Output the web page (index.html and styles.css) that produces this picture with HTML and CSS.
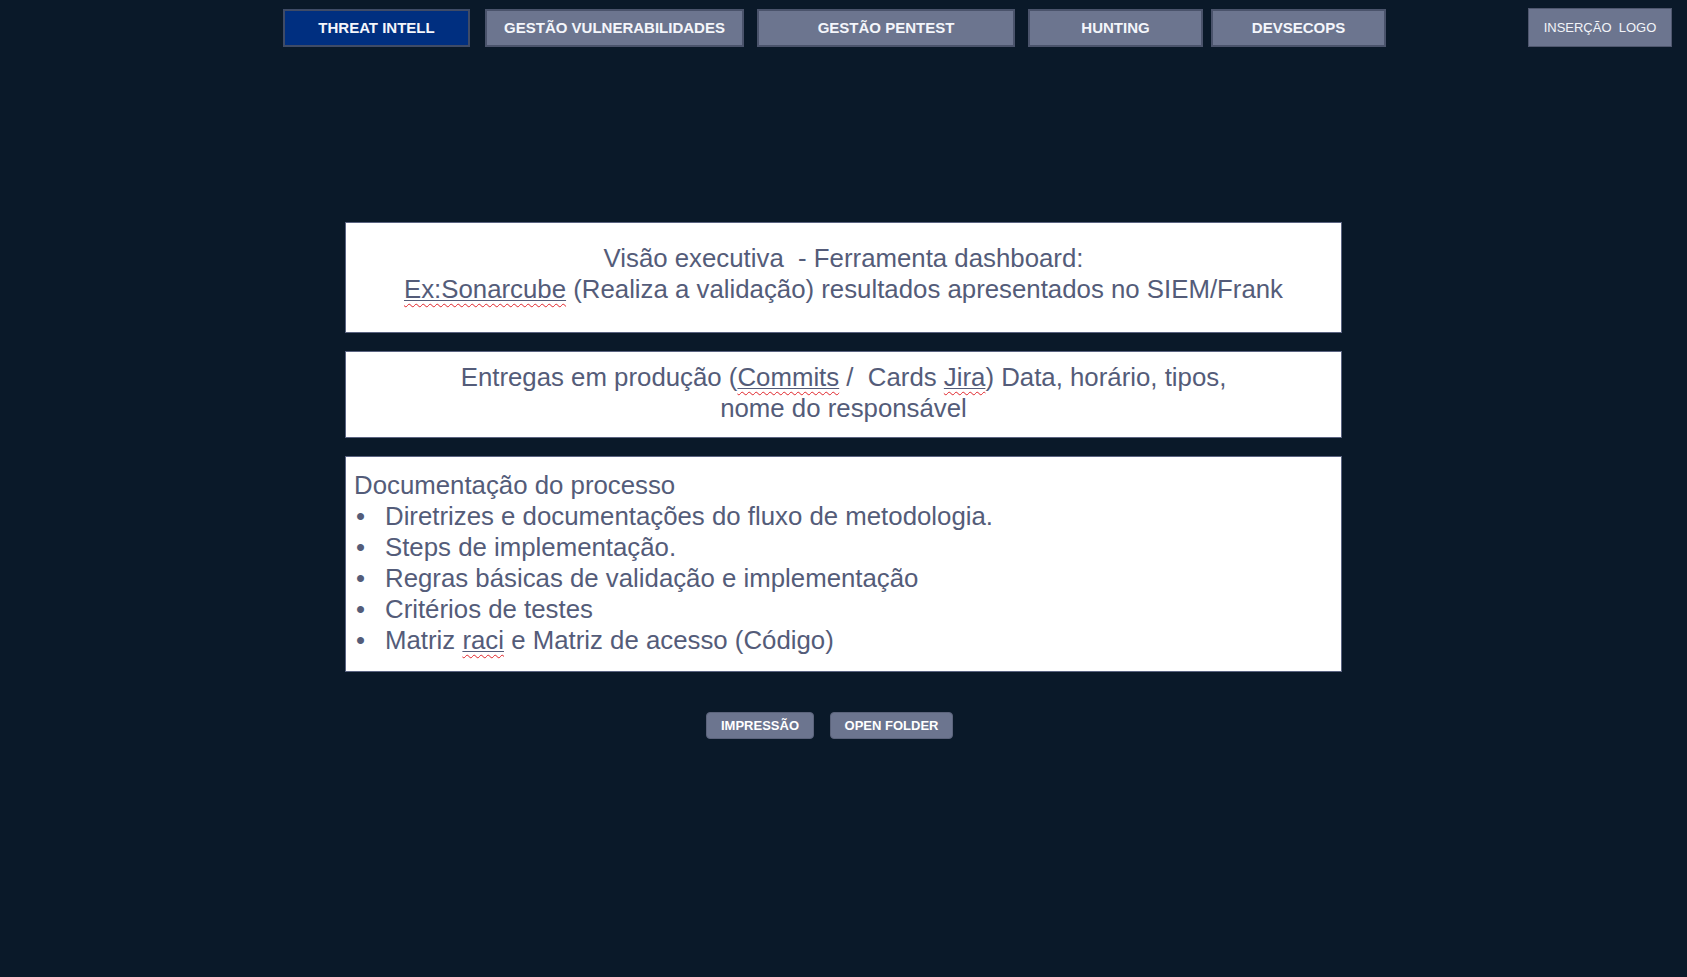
FILE: index.html
```html
<!DOCTYPE html>
<html lang="pt">
<head>
<meta charset="utf-8">
<title>DevSecOps</title>
<link rel="stylesheet" href="styles.css">
</head>
<body>
<header class="topbar">
  <nav class="tabs">
    <a class="tab tab-active tab-threat">THREAT INTELL</a>
    <a class="tab tab-vuln">GESTÃO VULNERABILIDADES</a>
    <a class="tab tab-pentest">GESTÃO PENTEST</a>
    <a class="tab tab-hunting">HUNTING</a>
    <a class="tab tab-devsecops">DEVSECOPS</a>
  </nav>
  <div class="logo">INSERÇÃO&nbsp; LOGO</div>
</header>

<main class="content">
  <section class="card card-exec">
    <p>Visão executiva &nbsp;- Ferramenta dashboard:<br><span class="ul"><span class="spell">Ex:Sonarcube</span></span> (Realiza a validação) resultados apresentados no SIEM/Frank</p>
  </section>

  <section class="card card-deliv">
    <p>Entregas em produção (<span class="ul"><span class="spell">Commits</span></span> / &nbsp;Cards <span class="ul"><span class="spell">Jira</span></span>) Data, horário, tipos,<br>nome do responsável</p>
  </section>

  <section class="card card-docs">
    <p class="docs-title">Documentação do processo</p>
    <ul class="docs-list">
      <li><span class="bullet">•</span><span>Diretrizes e documentações do fluxo de metodologia.</span></li>
      <li><span class="bullet">•</span><span>Steps de implementação.</span></li>
      <li><span class="bullet">•</span><span>Regras básicas de validação e implementação</span></li>
      <li><span class="bullet">•</span><span>Critérios de testes</span></li>
      <li><span class="bullet">•</span><span>Matriz <span class="ul"><span class="spell">raci</span></span> e Matriz de acesso (Código)</span></li>
    </ul>
  </section>

  <div class="actions">
    <button class="btn btn-print">IMPRESSÃO</button>
    <button class="btn btn-folder">OPEN FOLDER</button>
  </div>
</main>
</body>
</html>
```
FILE: styles.css
```css
html, body {
  margin: 0;
  padding: 0;
}
body {
  background: #0a1929;
  min-height: 100vh;
  font-family: "Liberation Sans", Arial, sans-serif;
}

.topbar {
  display: flex;
  align-items: flex-start;
  padding-top: 8px;
}

.tabs {
  display: flex;
  margin-left: 283px;
  margin-top: 1px;
}

.tab {
  box-sizing: border-box;
  height: 38px;
  display: flex;
  align-items: center;
  justify-content: center;
  padding-bottom: 2px;
  background: #6c758f;
  border: 2px solid #4a536b;
  color: #f4f6fb;
  font-weight: bold;
  font-size: 15px;
  text-decoration: none;
  cursor: pointer;
}
.tab-active {
  background: #002f80;
  border-color: #3f4b66;
}
.tab-threat { width: 187px; }
.tab-vuln { width: 259px; margin-left: 15px; }
.tab-pentest { width: 258px; margin-left: 13px; }
.tab-hunting { width: 175px; margin-left: 13px; }
.tab-devsecops { width: 175px; margin-left: 8px; }

.logo {
  box-sizing: border-box;
  margin-left: auto;
  margin-right: 15px;
  width: 144px;
  height: 39px;
  display: flex;
  align-items: center;
  justify-content: center;
  background: #6c758f;
  border: 1px solid #4f576e;
  color: #f2f4f9;
  font-size: 13px;
}

.content {
  width: 997px;
  margin: 175px auto 0;
  display: flex;
  flex-direction: column;
  gap: 18px;
}

.card {
  box-sizing: border-box;
  background: #ffffff;
  border: 1px solid #5a6380;
  color: #545c79;
  font-size: 25.8px;
  line-height: 31px;
}
.card p {
  margin: 0;
}
.card-exec {
  text-align: center;
  padding: 20px 10px 27px;
}
.card-deliv {
  text-align: center;
  padding: 10px 10px 13px;
}
.card-docs {
  padding: 13px 8px 15px;
}
.docs-list {
  list-style: none;
  margin: 0;
  padding: 0;
}
.docs-list li {
  display: flex;
}
.bullet {
  width: 29px;
  padding-left: 2px;
  flex: none;
}

.ul {
  text-decoration: underline solid #545c79;
  text-decoration-thickness: 1px;
  text-underline-offset: 2px;
}
.spell {
  text-decoration: underline wavy #e0242a;
  text-decoration-thickness: 1px;
  text-underline-offset: 5px;
}

.actions {
  display: flex;
  justify-content: center;
  gap: 16px;
  margin-top: 22px;
  padding-right: 28px;
}
.btn {
  box-sizing: border-box;
  height: 27px;
  padding: 0;
  white-space: nowrap;
  background: #6c758f;
  border: 1px solid #5b637b;
  border-radius: 4px;
  color: #ffffff;
  font-family: "Liberation Sans", Arial, sans-serif;
  font-weight: bold;
  font-size: 13px;
  cursor: pointer;
}
.btn-print { width: 108px; }
.btn-folder { width: 123px; }
```
